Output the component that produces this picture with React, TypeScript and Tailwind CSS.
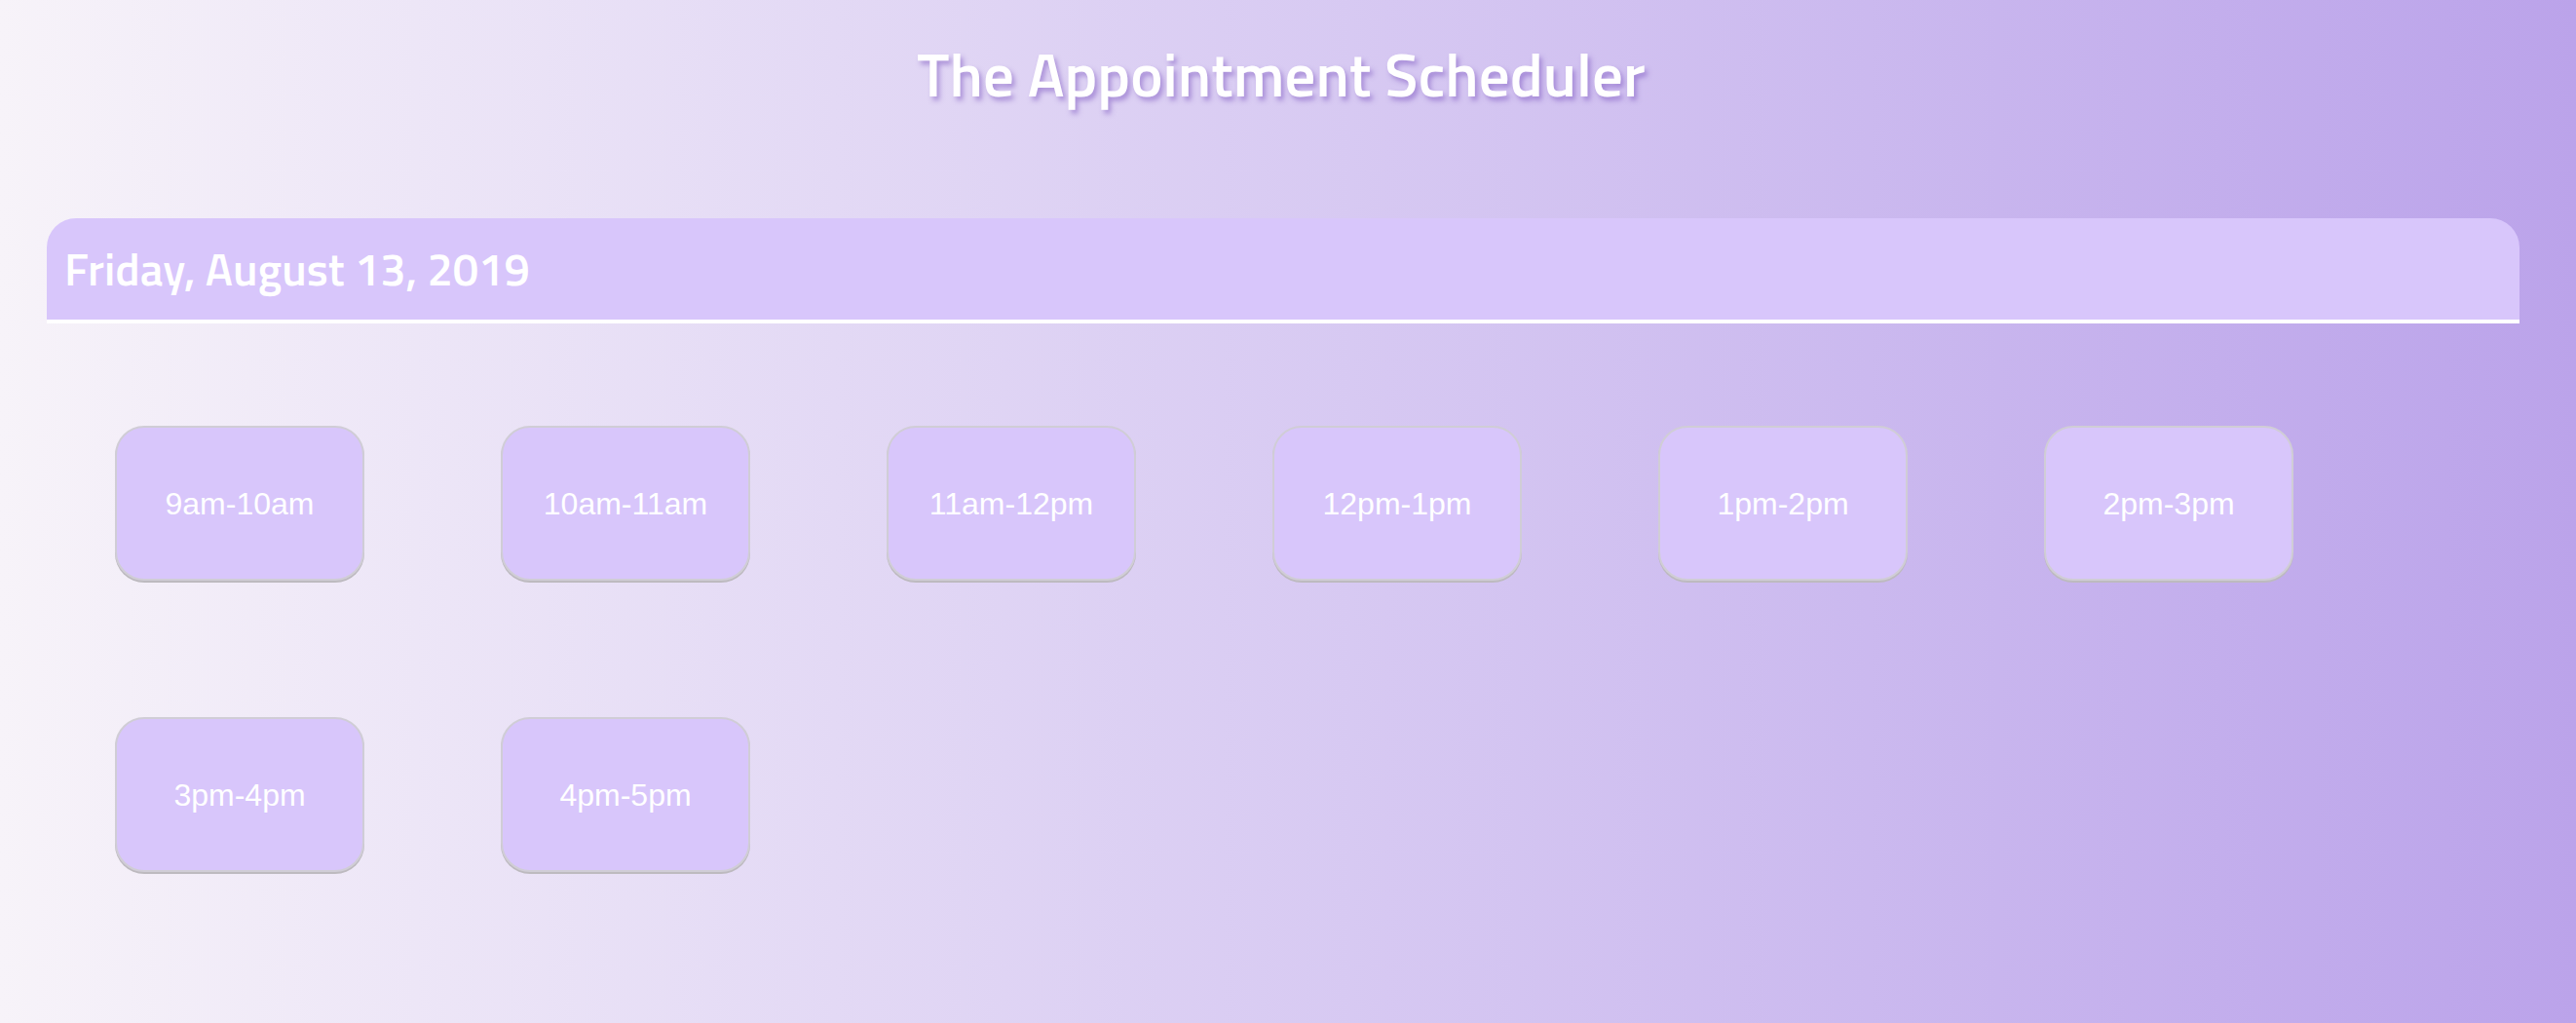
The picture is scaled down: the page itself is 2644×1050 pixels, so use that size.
const slots = [
  "9am-10am",
  "10am-11am",
  "11am-12pm",
  "12pm-1pm",
  "1pm-2pm",
  "2pm-3pm",
  "3pm-4pm",
  "4pm-5pm",
];

const headingFont =
  "font-['Titillium_Web','DejaVu_Sans_Condensed','Liberation_Sans_Narrow','Roboto_Condensed',Roboto,sans-serif]";

export default function App() {
  return (
    <div className="h-[1050px] w-full overflow-hidden bg-gradient-to-r from-[#f7f3f9] to-[#bba3ea]">
      <h1
        className={`${headingFont} pr-[14px] pt-[36px] text-center text-[63px] font-semibold leading-[80px] text-white [text-shadow:3px_4px_5px_rgba(120,80,190,0.5)]`}
      >
        The Appointment Scheduler
      </h1>

      <section className="ml-[48px] mr-[58px] mt-[108px]">
        <div className="flex h-[108px] items-center rounded-t-[30px] border-b-4 border-white bg-[#d8c6fb] pl-[18px]">
          <h2 className={`${headingFont} text-[47px] font-semibold text-white`}>Friday, August 13, 2019</h2>
        </div>

        <div className="flex flex-wrap pt-[35px]">
          {slots.map((slot) => (
            <button
              key={slot}
              type="button"
              className="m-[70px] flex h-[159px] w-[256px] items-center justify-center rounded-[30px] border-2 border-[#d0cdd6] bg-[#d8c6fb] font-['Liberation_Sans',Arial,sans-serif] text-[32px] text-white shadow-[0_2px_0_#bdbabf]"
            >
              {slot}
            </button>
          ))}
        </div>
      </section>
    </div>
  );
}
